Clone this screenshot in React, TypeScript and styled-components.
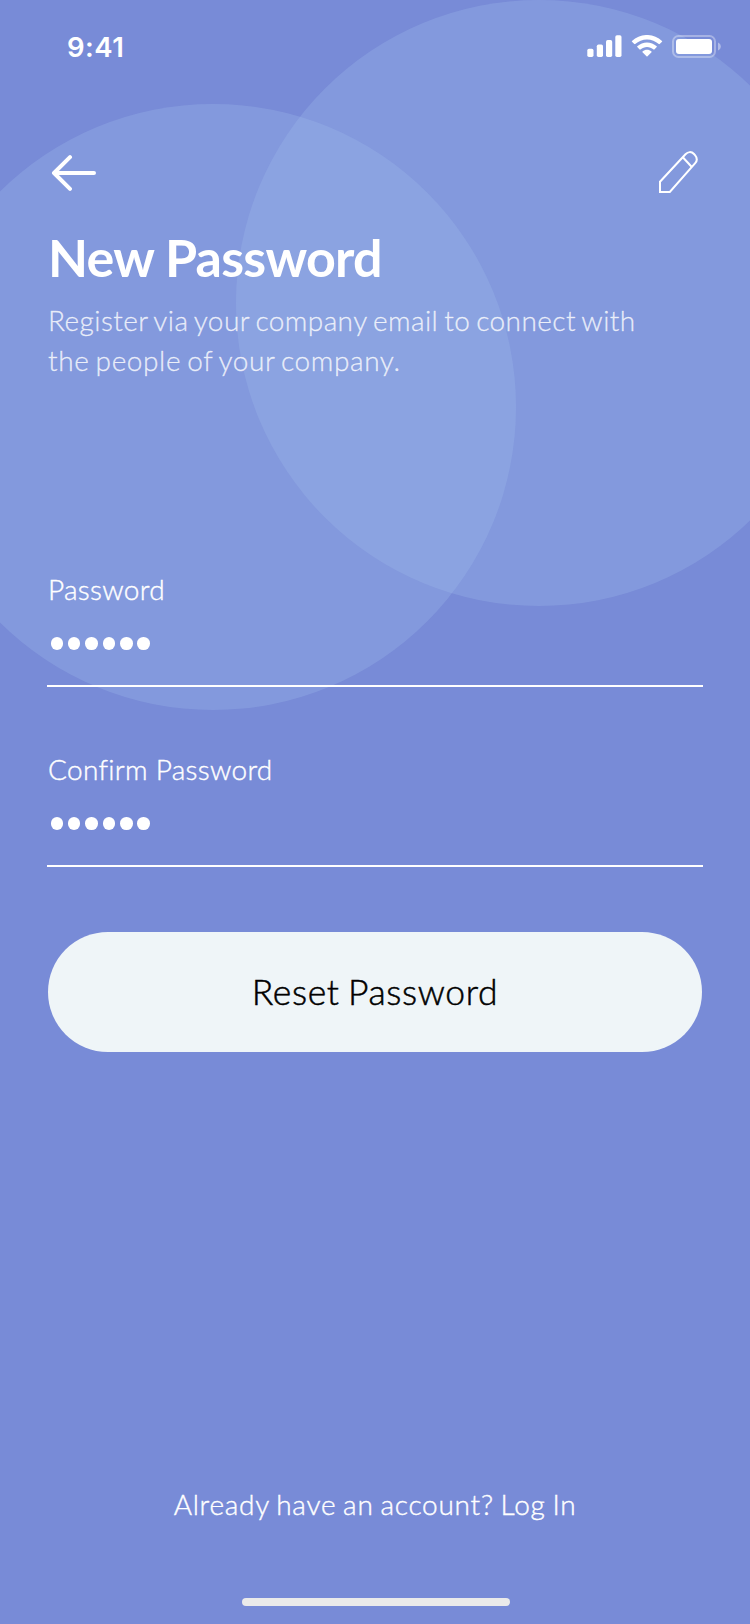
import React from "react";
import styled, { createGlobalStyle } from "styled-components";

const GlobalStyle = createGlobalStyle`
  * { box-sizing: border-box; }
  body { margin: 0; background: #788bd7; }
`;

const Screen = styled.main`
  position: relative;
  isolation: isolate;
  display: flex;
  flex-direction: column;
  width: 750px;
  height: 1624px;
  overflow: hidden;
  background: #788bd7;
  color: #fff;
  font-family: Lato, "Open Sans", sans-serif;
  font-weight: 300;
`;

const Circle = styled.div<{ $x: number; $y: number }>`
  position: absolute;
  z-index: -1;
  left: ${(p) => p.$x}px;
  top: ${(p) => p.$y}px;
  width: 606px;
  height: 606px;
  border-radius: 50%;
  background: rgba(163, 189, 237, 0.28);
`;

const StatusBar = styled.header`
  display: flex;
  justify-content: space-between;
  align-items: center;
  height: 94px;
  padding: 0 28px 0 67px;
`;

const Time = styled.time`
  font-family: Inter, sans-serif;
  font-size: 27.5px;
  font-weight: 600;
  line-height: 34px;
  letter-spacing: 0.5px;
`;

const Indicators = styled.div`
  display: flex;
  align-items: center;
  gap: 9px;
  padding-bottom: 1px;
  svg { display: block; }
`;

const NavBar = styled.nav`
  display: flex;
  justify-content: space-between;
  align-items: center;
  height: 60px;
  margin-top: 49px;
  padding: 0 51px;
`;

const IconButton = styled.button`
  display: block;
  padding: 0;
  border: 0;
  background: none;
  color: inherit;
  svg { display: block; }
`;

const Content = styled.div`
  display: flex;
  flex-direction: column;
  padding: 0 48px;
`;

const Title = styled.h1`
  margin: 24px 0 0;
  font-size: 52px;
  font-weight: 700;
  line-height: 60px;
  letter-spacing: -0.75px;
  white-space: nowrap;
`;

const Subtitle = styled.p`
  margin: 13px 0 0;
  font-size: 28px;
  line-height: 40px;
  word-spacing: -2px;
  white-space: nowrap;
  color: rgba(255, 255, 255, 0.78);
  -webkit-text-stroke: 0.4px rgba(255, 255, 255, 0.6);
`;

const SubtitleLine = styled.span<{ $spacing: number }>`
  display: block;
  letter-spacing: ${(p) => p.$spacing}px;
`;

const Form = styled.form`
  display: flex;
  flex-direction: column;
  margin-top: 189px;
`;

const Field = styled.div`
  display: flex;
  flex-direction: column;
  height: 118px;
  margin: 0 -1px 62px;
  padding-left: 1px;
  border-bottom: 2px solid #fff;
`;

const Label = styled.label`
  font-size: 28px;
  line-height: 40px;
  letter-spacing: 0.3px;
  -webkit-text-stroke: 0.4px #fff;
`;

const Mask = styled.div`
  display: flex;
  gap: 4.8px;
  margin: 28px 0 0 2.5px;
`;

const Dot = styled.span`
  width: 12.6px;
  height: 12.6px;
  border-radius: 50%;
  background: #fff;
`;

const SubmitButton = styled.button`
  height: 120px;
  margin-top: 3px;
  padding: 0 0 2px;
  border: 0;
  border-radius: 60px;
  background: #eff5f8;
  color: #000;
  font: inherit;
  font-size: 35.5px;
  letter-spacing: 0.65px;
  word-spacing: -2px;
  -webkit-text-stroke: 0.5px #000;
`;

const Footer = styled.footer`
  display: flex;
  flex-direction: column;
  align-items: center;
  margin-top: auto;
  padding-bottom: 18px;
`;

const LoginPrompt = styled.p`
  margin: 0 0 74px;
  font-size: 28px;
  line-height: 40px;
  letter-spacing: 0.75px;
  word-spacing: -1.5px;
  white-space: nowrap;
  -webkit-text-stroke: 0.4px #fff;
`;

const HomeIndicator = styled.div`
  width: 268px;
  height: 8px;
  margin-left: 2px;
  border-radius: 4px;
  background: #eaeaea;
`;

const SignalIcon = () => (
  <svg width="35" height="23" viewBox="0 0 35 23" fill="#fff">
    <rect x="0.3" y="13.8" width="6.2" height="8.2" rx="1.7" />
    <rect x="9.8" y="9.6" width="6.2" height="12.4" rx="1.7" />
    <rect x="19" y="5" width="6.2" height="17" rx="1.7" />
    <rect x="28.3" y="0.3" width="6.2" height="21.7" rx="1.7" />
  </svg>
);

const WifiIcon = () => (
  <svg width="32" height="23" viewBox="0 0 32 23" fill="#fff">
    <path d="M16 4.4c4.4 0 8.6 1.7 11.8 4.7.2.2.6.2.9 0l2.3-2.3c.3-.3.3-.7 0-.9C22.7-2 9.3-2 1 5.9c-.3.2-.3.6 0 .9l2.3 2.3c.3.2.6.2.9 0C7.4 6.1 11.6 4.4 16 4.4z" />
    <path d="M16 11.9c2.4 0 4.7.9 6.5 2.5.3.3.7.2.9 0l2.3-2.3c.3-.3.3-.7 0-.9-5.5-5.1-14-5.1-19.4 0-.3.2-.3.7 0 .9l2.3 2.3c.2.2.6.3.9 0 1.8-1.6 4.1-2.5 6.5-2.5z" />
    <path d="M20.5 17.3c.3-.3.3-.7 0-.9-2.6-2.2-6.4-2.2-9 0-.3.2-.3.6 0 .9l4 4c.3.3.7.3 1 0z" />
  </svg>
);

const BatteryIcon = () => (
  <svg width="50" height="23" viewBox="0 0 50 23">
    <rect x="1" y="1" width="42" height="21" rx="5.5" fill="none" stroke="#fff" strokeOpacity="0.34" strokeWidth="2" />
    <rect x="4" y="4" width="36" height="15" rx="3" fill="#fff" />
    <path d="M46 7.5c1.7.7 2.8 2.2 2.8 4s-1.1 3.3-2.8 4z" fill="#fff" fillOpacity="0.42" />
  </svg>
);

const BackIcon = () => (
  <svg width="46" height="36" viewBox="0 0 46 36" fill="none" stroke="#fff" strokeWidth="4" strokeLinecap="round" strokeLinejoin="round">
    <path d="M43 18H3M19 2.2L3 18l16 15.8" />
  </svg>
);

const PencilIcon = () => (
  <svg width="42" height="46" viewBox="0 0 42 46" fill="none" stroke="#fff" strokeWidth="2">
    <path d="M3 42V31.7L28.5 4.3C31 1.5 34.5 1.4 37 4l1 1.2C40.3 8 40.3 10.8 38.2 13.2L12.8 42z" />
    <path d="M25.8 7.2l9 9.8" />
  </svg>
);

const PasswordField = ({ label }: { label: string }) => (
  <Field>
    <Label>{label}</Label>
    <Mask>
      {Array.from({ length: 6 }, (_, i) => <Dot key={i} />)}
    </Mask>
  </Field>
);

export default function App() {
  return (
    <>
      <GlobalStyle />
      <Screen>
        <Circle $x={236} $y={0} />
        <Circle $x={-90} $y={104} />
        <StatusBar>
          <Time>9:41</Time>
          <Indicators>
            <SignalIcon />
            <WifiIcon />
            <BatteryIcon />
          </Indicators>
        </StatusBar>
        <NavBar>
          <IconButton aria-label="Back"><BackIcon /></IconButton>
          <IconButton aria-label="Edit"><PencilIcon /></IconButton>
        </NavBar>
        <Content>
          <Title>New Password</Title>
          <Subtitle>
            <SubtitleLine $spacing={0.42}>Register via your company email to connect with</SubtitleLine>
            <SubtitleLine $spacing={0.6}>the people of your company.</SubtitleLine>
          </Subtitle>
          <Form>
            <PasswordField label="Password" />
            <PasswordField label="Confirm Password" />
            <SubmitButton type="button">Reset Password</SubmitButton>
          </Form>
        </Content>
        <Footer>
          <LoginPrompt>Already have an account? Log In</LoginPrompt>
          <HomeIndicator />
        </Footer>
      </Screen>
    </>
  );
}
